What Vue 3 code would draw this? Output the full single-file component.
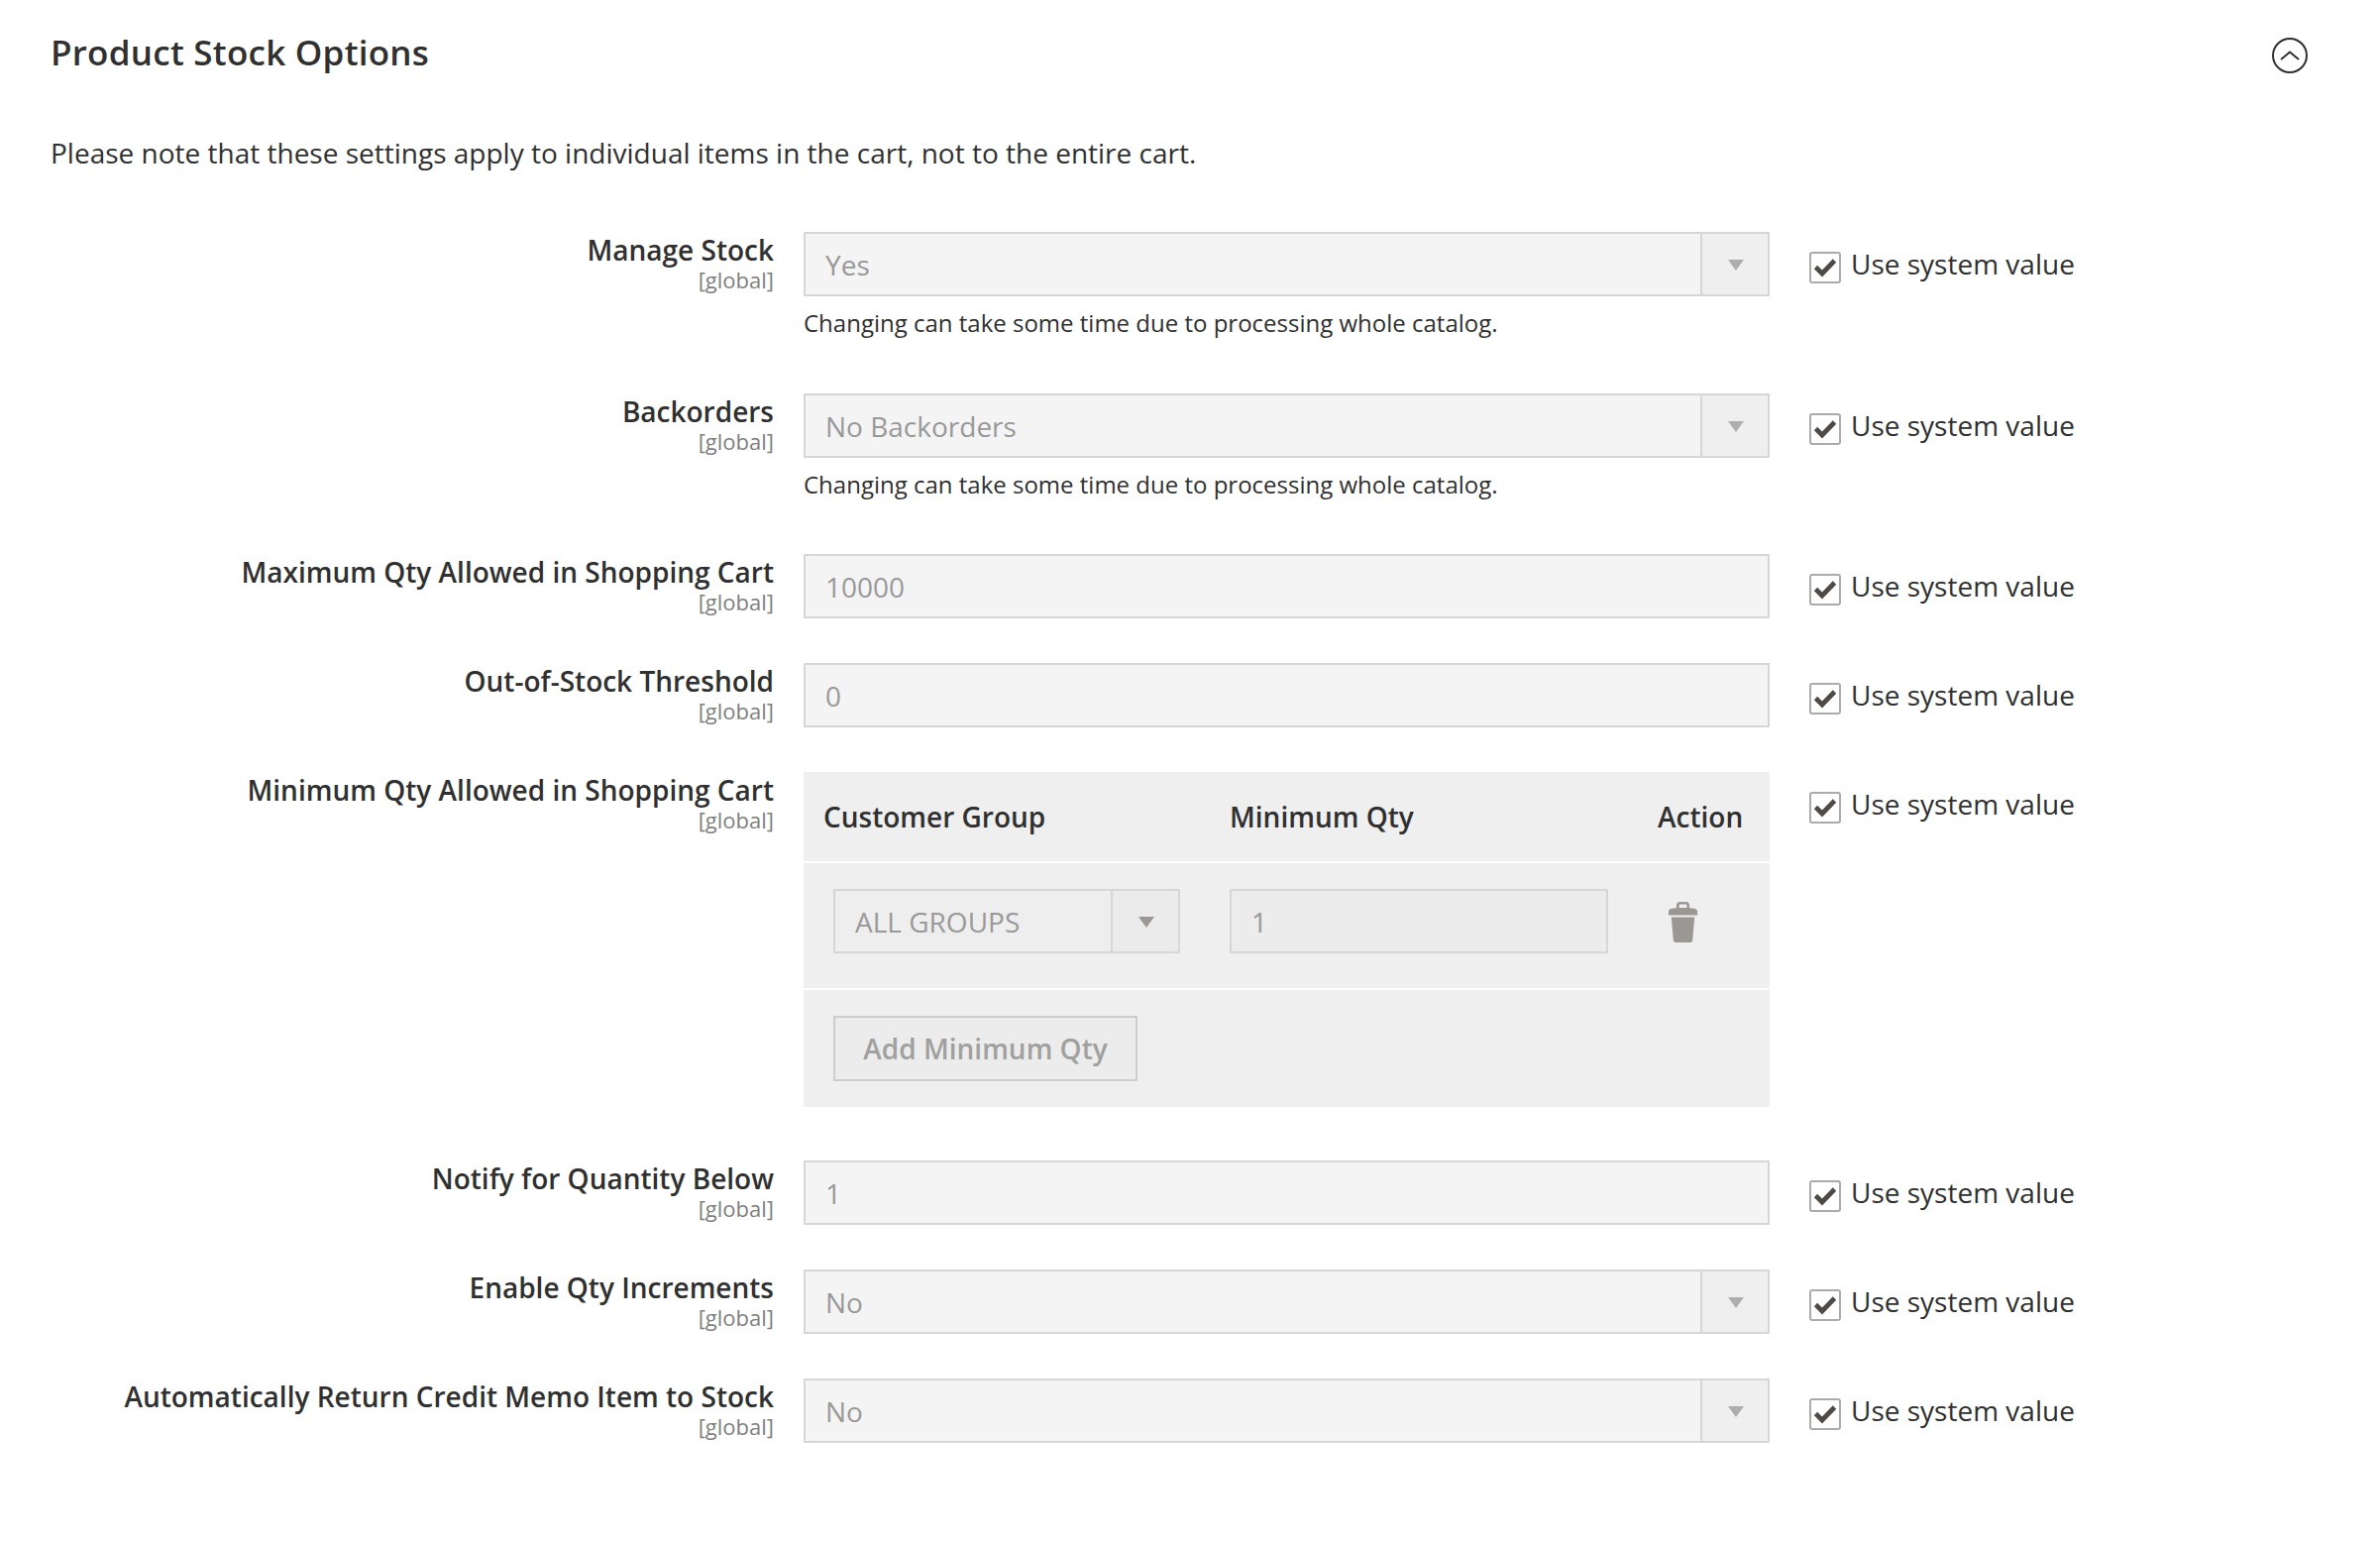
<script setup>
const rows = [
  { label: 'Manage Stock', type: 'select', value: 'Yes', note: 'Changing can take some time due to processing whole catalog.' },
  { label: 'Backorders', type: 'select', value: 'No Backorders', note: 'Changing can take some time due to processing whole catalog.' },
  { label: 'Maximum Qty Allowed in Shopping Cart', type: 'input', value: '10000' },
  { label: 'Out-of-Stock Threshold', type: 'input', value: '0' },
  { label: 'Minimum Qty Allowed in Shopping Cart', type: 'table' },
  { label: 'Notify for Quantity Below', type: 'input', value: '1' },
  { label: 'Enable Qty Increments', type: 'select', value: 'No' },
  { label: 'Automatically Return Credit Memo Item to Stock', type: 'select', value: 'No' }
]
</script>

<template>
  <main class="page">
    <header class="head">
      <h1 class="title">Product Stock Options</h1>
      <svg class="collapse" viewBox="0 0 36 36" aria-hidden="true">
        <circle cx="18" cy="18" r="17" fill="none" stroke="#303030" stroke-width="2" />
        <path d="M9 22 18 14.500 27 22" fill="none" stroke="#303030" stroke-width="2" />
      </svg>
    </header>
    <p class="intro">Please note that these settings apply to individual items in the cart, not to the entire cart.</p>

    <section class="form">
      <div v-for="row in rows" :key="row.label" class="row" :class="'row-' + row.type">
        <div class="label">
          <div class="name">{{ row.label }}</div>
          <div class="scope">[global]</div>
        </div>

        <div class="control">
          <div v-if="row.type === 'select'" class="field select">
            <span class="value">{{ row.value }}</span>
            <span class="caret"><i class="tri"></i></span>
          </div>
          <div v-else-if="row.type === 'input'" class="field">
            <span class="value">{{ row.value }}</span>
          </div>
          <div v-else class="table">
            <div class="t-head">
              <span class="th th-group">Customer Group</span>
              <span class="th th-qty">Minimum Qty</span>
              <span class="th th-action">Action</span>
            </div>
            <div class="t-row">
              <div class="field select small">
                <span class="value">ALL GROUPS</span>
                <span class="caret small-caret"><i class="tri"></i></span>
              </div>
              <div class="field qty"><span class="value">1</span></div>
              <svg class="trash" viewBox="0 0 29 41" aria-hidden="true">
                <path fill="none" stroke="#9b9792" stroke-width="2.600" d="M9.300 8V3.500c0-1.200.8-2.200 2-2.200h6.400c1.200 0 2 1 2 2.200V8" />
                <path fill="#9b9792" d="M0 13.500V10c0-1.500 1-2.600 2.500-2.900L9 6h11l6.500 1.100c1.500.3 2.500 1.400 2.500 2.900v3.500H0Z" />
                <path fill="#9b9792" d="M2.800 15.500h23.400l-2 23.300c-.1 1.300-1 2.200-2.300 2.200H7.100c-1.300 0-2.200-.9-2.300-2.200L2.800 15.500Z" />
              </svg>
            </div>
            <div class="t-foot">
              <div class="add">Add Minimum Qty</div>
            </div>
          </div>
          <div v-if="row.note" class="note">{{ row.note }}</div>
        </div>

        <div class="system">
          <span class="box">
            <svg viewBox="0 0 28 28" aria-hidden="true">
              <path d="M4.500 13.500 11 20 23.500 7" fill="none" stroke="#4f4a45" stroke-width="4.800" />
            </svg>
          </span>
          <span class="system-text">Use system value</span>
        </div>
      </div>
    </section>
  </main>
</template>

<style scoped>
.page {
  width: 2402px;
  height: 1558px;
  box-sizing: border-box;
  padding: 0 73px 0 51px;
  background: #fff;
  color: #303030;
  font-family: "Open Sans", "Liberation Sans", sans-serif;
  overflow: hidden;
}
.head {
  display: flex;
  align-items: center;
  justify-content: space-between;
  height: 108px;
  padding-top: 4px;
  box-sizing: border-box;
}
.title {
  margin: 0 0 7px;
  font-size: 35px;
  font-weight: 600;
  line-height: 1;
  letter-spacing: 0.25px;
}
.collapse {
  width: 36px;
  height: 36px;
}
.intro {
  margin: 27px 0 0;
  font-size: 28px;
  line-height: 38px;
}
.form {
  margin-top: 61px;
  margin-left: -51px;
}
.row {
  display: grid;
  grid-template-columns: 781px 975px auto;
  column-gap: 30px;
  margin-bottom: 45px;
}
.row-select:nth-child(1) {
  margin-bottom: 55px;
}
.row-select:nth-child(2) {
  margin-bottom: 54px;
}
.row:nth-child(5) {
  margin-bottom: 54px;
}
.name {
  font-size: 28px;
  line-height: 36px;
  font-weight: 600;
}
.label {
  text-align: right;
}
.scope {
  margin-top: 1px;
  font-size: 22px;
  line-height: 23px;
  color: #808080;
}
.field {
  box-sizing: border-box;
  height: 65px;
  display: flex;
  align-items: center;
  background: #f4f4f4;
  border: 2px solid #d6d6d6;
  border-radius: 1px;
}
.value {
  padding-left: 20px;
  font-size: 28px;
  color: #999;
  flex: 1;
}
.caret {
  box-sizing: border-box;
  width: 68px;
  padding-left: 2px;
  align-self: stretch;
  border-left: 2px solid #d6d6d6;
  background: #efefef;
  display: flex;
  align-items: center;
  justify-content: center;
}
.tri {
  width: 0;
  height: 0;
  margin-top: 2px;
  border-left: 8px solid transparent;
  border-right: 8px solid transparent;
  border-top: 11px solid #aeaeae;
}
.note {
  margin-top: 10px;
  font-size: 24px;
  line-height: 33px;
}
.system {
  display: flex;
  align-items: center;
  align-self: start;
  gap: 10px;
  margin-left: 10px;
  height: 65px;
}
.box {
  box-sizing: border-box;
  width: 32px;
  height: 32px;
  border: 2px solid #ababab;
  border-radius: 3px;
  margin-top: 7px;
  display: flex;
}
.box svg {
  width: 100%;
  height: 100%;
}
.system-text {
  font-size: 28px;
  margin-top: -2px;
}
.table {
  background: #efefef;
  border-radius: 2px;
}
.t-head {
  height: 90px;
  display: flex;
  align-items: center;
  border-bottom: 2px solid #fff;
  font-size: 28px;
  font-weight: 600;
  padding-left: 20px;
}
.th-group { width: 410px; }
.th-qty { width: 432px; }
.t-row {
  box-sizing: border-box;
  height: 128px;
  display: flex;
  align-items: flex-start;
  gap: 50px;
  padding: 26px 0 0 30px;
  border-bottom: 2px solid #fff;
}
.small {
  width: 350px;
  background: #eeeeee;
}
.qty {
  width: 382px;
  background: #ececec;
}
.small-caret {
  background: #ebebeb;
}
.row-table .tri {
  border-top-color: #9b9792;
}
.trash {
  width: 29px;
  height: 41px;
  margin: 13px 0 0 11px;
}
.t-foot {
  height: 118px;
  padding: 26px 0 0 30px;
  box-sizing: border-box;
}
.add {
  box-sizing: border-box;
  width: 307px;
  height: 66px;
  border: 2px solid #cdcdcd;
  background: #ececec;
  color: #a0a09f;
  font-size: 28px;
  font-weight: 600;
  display: flex;
  align-items: center;
  justify-content: center;
}
</style>
